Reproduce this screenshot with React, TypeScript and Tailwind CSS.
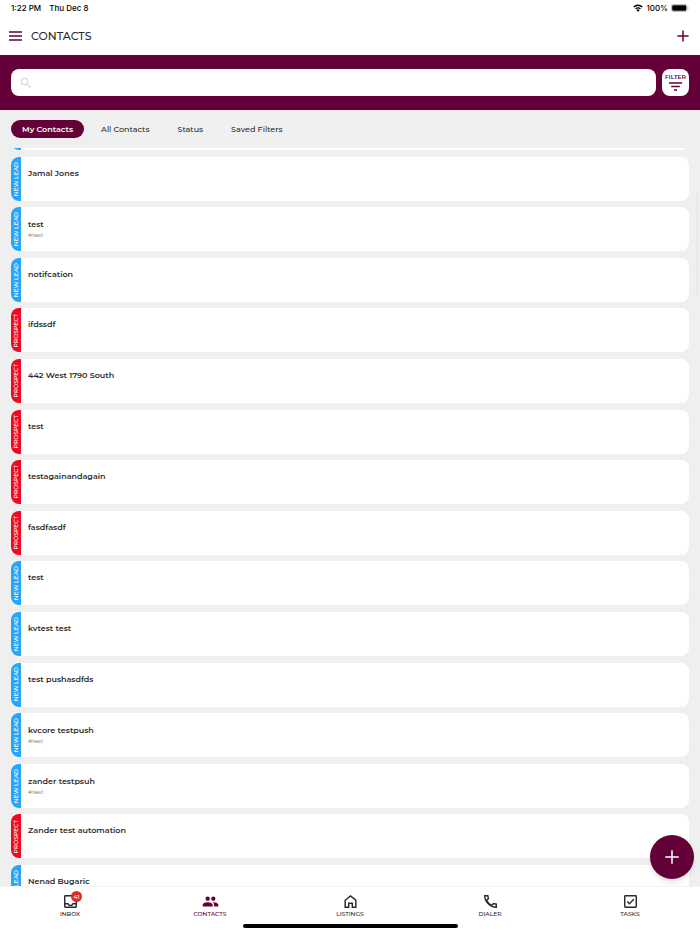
import React, { useState } from 'react'
import { MdPeople, MdSearch } from 'react-icons/md'

type LeadStatus = 'NEW LEAD' | 'PROSPECT'

interface Contact {
  id: number
  name: string
  status: LeadStatus
  tag?: string
}

const contacts: Contact[] = [
  { id: 1, name: '', status: 'NEW LEAD' },
  { id: 2, name: 'Jamal Jones', status: 'NEW LEAD' },
  { id: 3, name: 'test', status: 'NEW LEAD', tag: '#test' },
  { id: 4, name: 'notifcation', status: 'NEW LEAD' },
  { id: 5, name: 'ifdssdf', status: 'PROSPECT' },
  { id: 6, name: '442 West 1790 South', status: 'PROSPECT' },
  { id: 7, name: 'test', status: 'PROSPECT' },
  { id: 8, name: 'testagainandagain', status: 'PROSPECT' },
  { id: 9, name: 'fasdfasdf', status: 'PROSPECT' },
  { id: 10, name: 'test', status: 'NEW LEAD' },
  { id: 11, name: 'kvtest test', status: 'NEW LEAD' },
  { id: 12, name: 'test pushasdfds', status: 'NEW LEAD' },
  { id: 13, name: 'kvcore testpush', status: 'NEW LEAD', tag: '#test' },
  { id: 14, name: 'zander testpsuh', status: 'NEW LEAD', tag: '#test' },
  { id: 15, name: 'Zander test automation', status: 'PROSPECT' },
  { id: 16, name: 'Nenad Bugaric', status: 'NEW LEAD' },
]

const tabs = ['My Contacts', 'All Contacts', 'Status', 'Saved Filters']

const StatusBar: React.FC = () => (
  <div className="flex h-4 shrink-0 items-center justify-between px-[11px] font-['Inter',sans-serif] text-[8px] font-medium text-black">
    <div className="flex gap-2">
      <span>1:22 PM</span>
      <span>Thu Dec 8</span>
    </div>
    <div className="flex items-center gap-[3px]">
      <svg className="h-2 w-[10px]" viewBox="0 0 20 16" fill="none" stroke="currentColor" strokeWidth="2.6">
        <path d="M1.5 6a12 12 0 0 1 17 0M5 9.7a7 7 0 0 1 10 0" />
        <path d="M10 15.5 6.8 12.3a4.5 4.5 0 0 1 6.4 0z" fill="currentColor" stroke="none" />
      </svg>
      <span>100%</span>
      <svg className="h-2 w-[18px]" viewBox="0 0 18 8">
        <rect x="0.4" y="0.4" width="15.6" height="7.2" rx="2.2" fill="none" stroke="#999" strokeWidth="0.7" />
        <rect x="1.2" y="1.2" width="14" height="5.6" rx="1.4" fill="#000" />
        <path d="M16.8 2.8v2.4c.9-.3.9-2.1 0-2.4z" fill="#999" />
      </svg>
    </div>
  </div>
)

const ContactCard: React.FC<{ contact: Contact }> = ({ contact }) => (
  <li className="flex h-11 shrink-0 overflow-hidden rounded-lg bg-white">
    <div
      className={`flex w-[10px] shrink-0 items-center justify-center text-[6px] leading-none font-medium text-white ${
        contact.status === 'NEW LEAD' ? 'bg-[#26a6fb]' : 'bg-[#ee0a24]'
      }`}
    >
      {contact.name && (
        <span className="rotate-180 whitespace-nowrap [writing-mode:vertical-rl]">{contact.status}</span>
      )}
    </div>
    <div className={contact.tag ? 'px-[7px] pt-[11px]' : 'px-[7px] pt-[10px]'}>
      <p className="text-[8px] leading-3 font-semibold text-[#2b2b2b]">{contact.name}</p>
      {contact.tag && <p className="text-[6px] leading-[10px] text-[#777]">{contact.tag}</p>}
    </div>
  </li>
)

interface NavItemProps {
  label: string
  active?: boolean
  badge?: number
  children: React.ReactNode
}

const NavItem: React.FC<NavItemProps> = ({ label, active, badge, children }) => (
  <a
    href="#"
    className={`flex flex-1 flex-col items-center text-[6px] leading-2 ${
      active ? 'text-[#640038]' : 'text-[#2b2b2b]'
    }`}
  >
    <span className="relative mb-[1px] flex h-4 w-4 items-center justify-center">
      {children}
      {badge && (
        <span className="absolute -top-[2px] -right-[4px] flex h-[11px] w-[11px] items-center justify-center rounded-full bg-[#e02b2b] text-[6px] font-medium text-white">
          {badge}
        </span>
      )}
    </span>
    <span className="font-medium">{label}</span>
  </a>
)

const App: React.FC = () => {
  const [activeTab, setActiveTab] = useState('My Contacts')
  const [query, setQuery] = useState('')

  return (
    <div className="relative flex h-screen flex-col overflow-hidden bg-[#efefef] font-['Montserrat','Inter',sans-serif]">
      {/* Header */}
      <div className="shrink-0 bg-white">
        <StatusBar />
        <header className="flex h-[39px] items-center px-[9px]">
          <button type="button" aria-label="Menu" className="text-[#640038]">
            <svg className="h-[10px] w-[13px]" viewBox="0 0 13 10" fill="currentColor">
              <path d="M0 .2h13v1.600H0zM0 4.200h13v1.600H0zM0 8.200h13v1.600H0z" />
            </svg>
          </button>
          <h1 className="ml-[9px] text-[11px] leading-4 font-medium text-[#2b2b2b]">CONTACTS</h1>
          <button type="button" aria-label="Add contact" className="mr-[2px] ml-auto text-[#640038]">
            <svg className="h-3 w-3" viewBox="0 0 12 12" fill="none" stroke="currentColor" strokeWidth="1.5">
              <path d="M6 .4v11.2M.4 6h11.2" />
            </svg>
          </button>
        </header>
      </div>

      {/* Search */}
      <div className="flex h-[55px] shrink-0 items-center gap-[6px] bg-[#640038] px-[11px]">
        <label className="flex h-[27px] flex-1 items-center rounded-lg bg-white px-2">
          <MdSearch className="h-[14px] w-[14px] text-[#d8d8d8]" />
          <input
            type="search"
            aria-label="Search contacts"
            value={query}
            onChange={(e) => setQuery(e.target.value)}
            className="ml-1 min-w-0 flex-1 bg-transparent text-[8px] outline-none"
          />
        </label>
        <button
          type="button"
          className="flex h-[27px] w-[27px] flex-col items-center justify-center gap-[1px] rounded-lg bg-white text-[6px] leading-[7px] font-semibold text-[#640038]"
        >
          FILTER
          <svg className="h-[9px] w-[13px]" viewBox="0 0 13 9" fill="currentColor">
            <path d="M0 .2h13v1.500H0zM2.200 3.700h8.600v1.500H2.200zM5 7.200h3v1.500H5z" />
          </svg>
        </button>
      </div>

      {/* Tabs */}
      <div className="flex h-[38px] shrink-0 items-center gap-[6px] px-[11px]">
        {tabs.map((tab) => (
          <button
            key={tab}
            type="button"
            onClick={() => setActiveTab(tab)}
            className={`h-[18px] rounded-full px-[11px] text-[8px] ${
              tab === activeTab ? 'bg-[#640038] font-semibold text-white' : 'bg-[#f0f0f0] font-medium text-[#2b2b2b]'
            }`}
          >
            {tab}
          </button>
        ))}
      </div>

      {/* Contact list, scrolled part of the way down */}
      <main className="relative flex min-h-0 flex-1 flex-col overflow-hidden px-[11px]">
        <ul className="-mt-[42px] -mb-[23px] flex flex-1 flex-col justify-between gap-[6px]">
          {contacts.map((contact) => (
            <ContactCard key={contact.id} contact={contact} />
          ))}
        </ul>
        <div className="absolute top-11 right-[2px] h-[104px] w-[2px] rounded-full bg-[#e8e8e8]" />
      </main>

      <button
        type="button"
        aria-label="New contact"
        className="absolute right-[6px] bottom-[55px] flex h-11 w-11 items-center justify-center rounded-full bg-[#640038] text-white shadow-md"
      >
        <svg className="h-[14px] w-[14px]" viewBox="0 0 14 14" fill="none" stroke="currentColor" strokeWidth="1.5">
          <path d="M7 .3v13.4M.3 7h13.4" />
        </svg>
      </button>

      {/* Bottom navigation */}
      <footer className="flex h-12 shrink-0 flex-col border-t border-[#f3f3f3] bg-white pt-[6px]">
        <nav className="flex">
          <NavItem label="INBOX" badge={41}>
            <svg className="h-[13px] w-[13px]" viewBox="0 0 18 18" fill="none" stroke="currentColor" strokeWidth="2">
              <rect x="1" y="1" width="16" height="16" rx="1" />
              <path d="M1 12h4.6a3.6 3.6 0 0 0 6.8 0H17" />
            </svg>
          </NavItem>
          <NavItem label="CONTACTS" active>
            <MdPeople className="h-[17px] w-[17px] shrink-0" />
          </NavItem>
          <NavItem label="LISTINGS">
            <svg className="h-[13px] w-[13px]" viewBox="0 0 18 18" fill="none" stroke="currentColor" strokeWidth="2">
              <path d="M1.6 7.2 9 1.3l7.4 5.9V17h-4.9v-5.7h-5V17H1.6z" />
            </svg>
          </NavItem>
          <NavItem label="DIALER">
            <svg className="h-[13px] w-[13px]" viewBox="0 0 18 18" fill="none" stroke="currentColor" strokeWidth="2">
              <path d="M1 1h4.3l.8 4-2.5 2.2a15 15 0 0 0 7.2 7.2l2.2-2.5 4 .8V17C8.5 17 1 9.5 1 1z" />
            </svg>
          </NavItem>
          <NavItem label="TASKS">
            <svg className="h-[13px] w-[13px]" viewBox="0 0 18 18" fill="none" stroke="currentColor" strokeWidth="2">
              <rect x="1" y="1" width="16" height="16" rx="1" />
              <path d="m4.5 9 3 3 6-6" />
            </svg>
          </NavItem>
        </nav>
        <div className="mx-auto mt-[6px] h-1 w-[215px] rounded-full bg-black" />
      </footer>
    </div>
  )
}

export default App
